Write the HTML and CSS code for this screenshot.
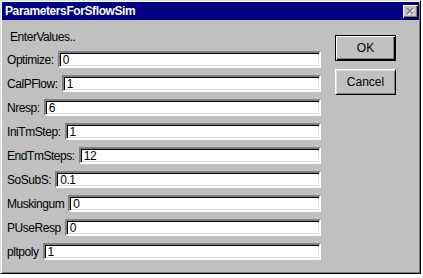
FILE: index.html
```html
<!DOCTYPE html>
<html lang="en">
<head>
  <meta charset="UTF-8">
  <title>ParametersForSflowSim</title>
  <link rel="stylesheet" href="styles.css">
</head>
<body>
  <div class="dialog">
    <div class="titlebar">
      <span class="title">ParametersForSflowSim</span>
      <span class="close">
        <svg width="15" height="13" viewBox="0 0 15 13">
          <path d="M5 4 L11 10 M11 4 L5 10" stroke="#fff" stroke-width="1.6"/>
          <path d="M4 3 L10 9 M10 3 L4 9" stroke="#808080" stroke-width="1.6"/>
        </svg>
      </span>
    </div>
    <div class="content">
      <form class="fields">
        <div class="caption">EnterValues..</div>
        <div class="row"><label for="optimize">Optimize:</label><input id="optimize" value="0"></div>
        <div class="row"><label for="calpflow">CalPFlow:</label><input id="calpflow" value="1"></div>
        <div class="row"><label for="nresp">Nresp:</label><input id="nresp" value="6"></div>
        <div class="row"><label for="initm">IniTmStep:</label><input id="initm" value="1"></div>
        <div class="row"><label for="endtm">EndTmSteps:</label><input id="endtm" value="12"></div>
        <div class="row"><label for="sosubs">SoSubS:</label><input id="sosubs" value="0.1"></div>
        <div class="row"><label for="musk">Muskingum</label><input id="musk" value="0"></div>
        <div class="row"><label for="puse">PUseResp</label><input id="puse" value="0"></div>
        <div class="row"><label for="pltpoly">pltpoly</label><input id="pltpoly" value="1"></div>
      </form>
      <div class="buttons">
        <button class="btn default">OK</button>
        <button class="btn">Cancel</button>
      </div>
    </div>
  </div>
</body>
</html>
```

FILE: styles.css
```css
body {
  margin: 0;
  background-color: #fff;
  font-family: "Liberation Sans", Arial, sans-serif;
  font-size: 12px;
  letter-spacing: -0.45px;
  color: #000;
}
.dialog {
  width: 421px;
  height: 274px;
  box-sizing: border-box;
  background-color: #c0c0c0;
  border: 1px solid;
  border-color: #dfdfdf #000 #000 #dfdfdf;
  box-shadow: inset 1px 1px #fff, inset -1px -1px #808080;
  padding: 1px;
}
.titlebar {
  height: 18px;
  background-color: #000080;
  display: flex;
  align-items: center;
  justify-content: space-between;
  padding: 0 1px 0 3px;
}
.title {
  color: #fff;
  font-weight: bold;
  font-size: 12px;
  letter-spacing: -0.4px;
}
.close {
  width: 15px;
  height: 13px;
  background-color: #c0c0c0;
  box-shadow: inset 1px 1px #fff, inset -1px -1px #000, inset -2px -2px #808080;
  display: flex;
}
.content {
  display: flex;
  padding: 10px 0 0 5px;
}
.fields {
  width: 314px;
  margin: 0;
  display: flex;
  flex-direction: column;
}
.caption {
  margin-left: 3px;
  line-height: 14px;
  margin-bottom: 7px;
}
.row {
  display: flex;
  align-items: center;
  gap: 4px;
  height: 17px;
  margin-bottom: 7px;
}
.row label {
  white-space: nowrap;
}
.row input {
  flex: 1;
  min-width: 0;
  height: 17px;
  box-sizing: border-box;
  border: 2px solid;
  border-color: #808080 #fff #fff #808080;
  box-shadow: inset 1px 1px #000, inset -1px -1px #dfdfdf;
  background-color: #fff;
  font-family: "Liberation Sans", Arial, sans-serif;
  font-size: 12px;
  letter-spacing: -0.45px;
  padding: 0 3px;
  outline: none;
}
.buttons {
  margin-left: 14px;
  margin-top: 5px;
  display: flex;
  flex-direction: column;
  gap: 8px;
}
.btn {
  width: 61px;
  height: 26px;
  box-sizing: border-box;
  background-color: #c0c0c0;
  border: 1px solid;
  border-color: #fff #000 #000 #fff;
  box-shadow: inset 1px 1px #dfdfdf, inset -1px -1px #808080;
  font-family: "Liberation Sans", Arial, sans-serif;
  font-size: 12px;
  color: #000;
  padding: 0;
}
.btn.default {
  border-color: #000;
  box-shadow: inset 1px 1px #fff, inset -1px -1px #000, inset -2px -2px #808080;
}
```
